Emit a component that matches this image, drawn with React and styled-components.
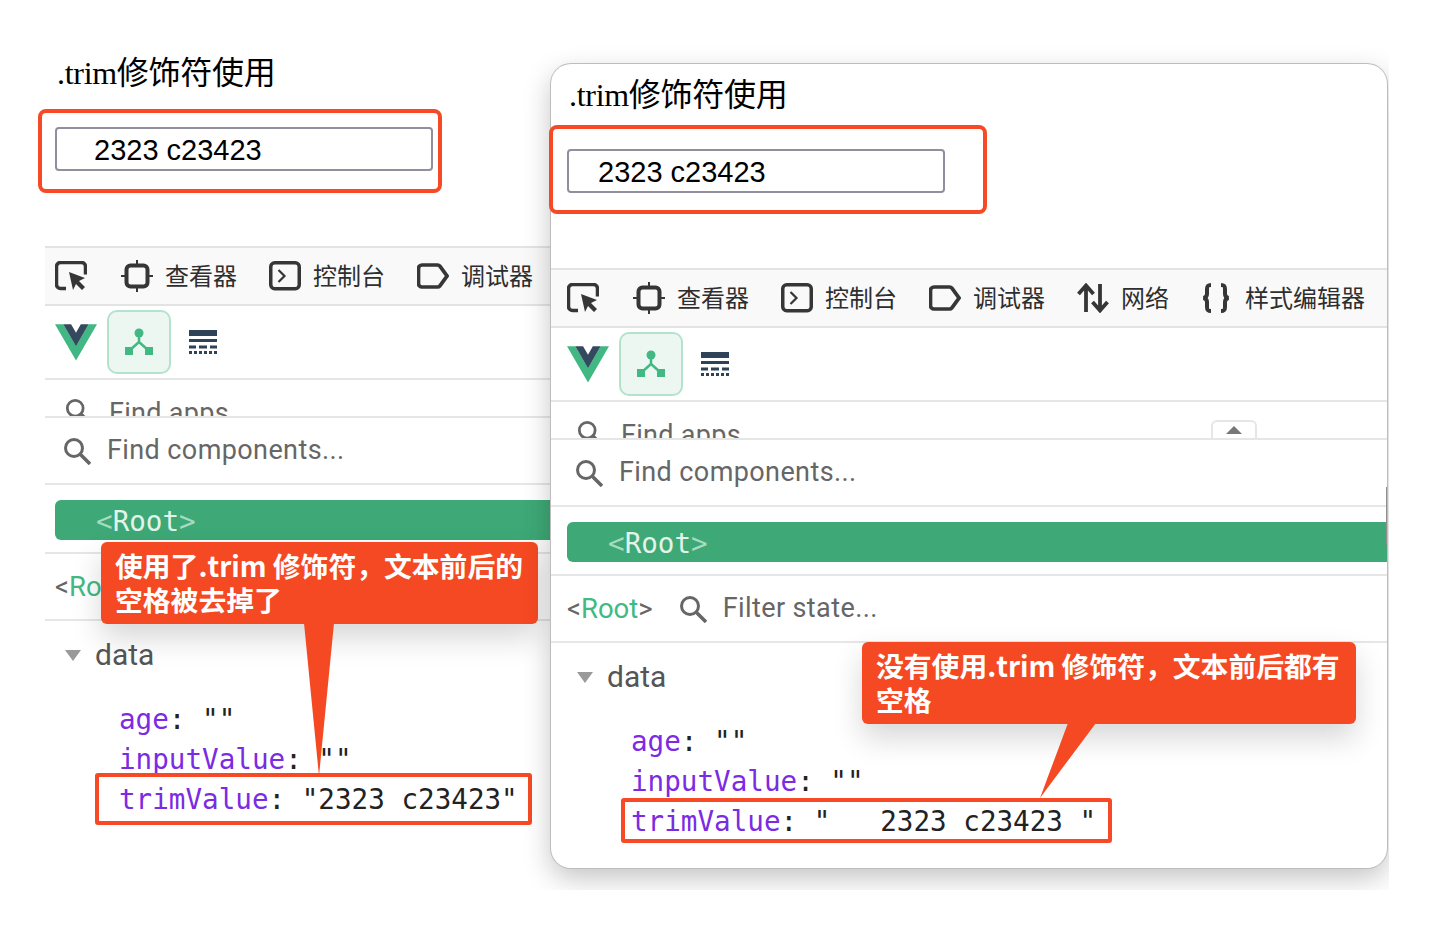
import React from "react";
import styled, { createGlobalStyle } from "styled-components";

const Global = createGlobalStyle`
  html, body { margin: 0; padding: 0; background: #fff; }
  body { font-family: "Liberation Sans", "Noto Sans CJK SC", sans-serif; }
`;

const Canvas = styled.div`
  position: relative;
  width: 1429px;
  height: 930px;
  overflow: hidden;
  background: #fff;
`;

const Panel = styled.section`
  position: absolute;
  left: 45px;
  top: 42px;
  width: 506px;
  height: 800px;
  overflow: hidden;
  background: #fff;
`;

/* The window's drop shadow is cut off by the edge of the captured area */
const CaptureFrame = styled.div`
  position: absolute;
  left: 500px;
  top: 44px;
  width: 889px;
  height: 846px;
  overflow: hidden;
  padding: 20px 0 0 51px;
  box-sizing: border-box;
`;

const FloatingWindow = styled.section`
  position: relative;
  width: 836px;
  height: 804px;
  overflow: hidden;
  background: #fff;
  border-radius: 20px;
  box-shadow: 0 0 0 1px #bdbdbd, 0 10px 28px rgba(0, 0, 0, 0.24);
`;

const Scrollbar = styled.span`
  position: absolute;
  right: 0;
  top: 423px;
  width: 1px;
  height: 58px;
  background: #8e8e8e;
`;

const PageHead = styled.div`
  padding: 9px 0 0 ${(p) => p.$inset + 2}px;
  height: 204px;
  box-sizing: border-box;
`;

const Title = styled.h1`
  margin: 0;
  font: 400 32px/44px "Liberation Serif", "Noto Sans CJK SC", serif;
  letter-spacing: -0.3px;
  color: #000;
`;

const TextInput = styled.input`
  display: block;
  box-sizing: border-box;
  margin: 32px 0 0 -2px;
  width: 378px;
  height: 44px;
  padding: 2px 0 0 ${(p) => p.$pad}px;
  border: 2px solid #8f8f9d;
  border-radius: 4px;
  font: 400 29px "Liberation Sans", Arial, sans-serif;
  color: #000;
  background: #fff;
  outline: none;
`;

const Toolbar = styled.div`
  display: flex;
  align-items: center;
  box-sizing: border-box;
  height: 60px;
  padding-left: ${(p) => p.$inset}px;
  background: #f9f9fa;
  border-top: 2px solid #e3e3e3;
  border-bottom: 2px solid #e3e3e3;
  white-space: nowrap;
`;

const Separator = styled.span`
  width: 2px;
  height: 38px;
  margin: 0 18px 0 16px;
  background: #e0e0e0;
`;

const Tab = styled.div`
  display: flex;
  align-items: center;
  gap: 12px;
  margin-right: 32px;
`;

const TabLabel = styled.span`
  margin-top: -2px;
  font: 400 24px/32px "Noto Sans CJK SC", sans-serif;
  color: #2e2e2e;
`;

const Plain = styled.svg`
  display: block;
  flex: none;
`;

const DevRow = styled.div`
  display: flex;
  align-items: center;
  box-sizing: border-box;
  height: ${(p) => p.$h}px;
  padding-left: ${(p) => p.$inset}px;
  border-bottom: 2px solid #e6e6e6;
  gap: ${(p) => p.$gap || 0}px;
`;

const ToolButton = styled.div`
  display: flex;
  align-items: center;
  justify-content: center;
  box-sizing: border-box;
  width: 64px;
  height: 64px;
  margin: 0 18px 0 10px;
  background: #ecf7f2;
  border: 2px solid #b4e3cd;
  border-radius: 10px;
`;

const AppsRow = styled.div`
  position: relative;
  box-sizing: border-box;
  height: 38px;
  padding: 18px 0 0 ${(p) => p.$inset + 10}px;
  border-bottom: 2px solid #e6e6e6;
  overflow: hidden;
  display: flex;
  gap: 18px;
  align-items: flex-start;
  font: 400 27px/30px Roboto, sans-serif;
  color: #666;
  letter-spacing: 0.3px;
`;

const Collapse = styled.span`
  position: absolute;
  left: 660px;
  top: 18px;
  width: 46px;
  height: 40px;
  box-sizing: border-box;
  border: 2px solid #e6e6e6;
  border-radius: 6px;
  &::after {
    content: "";
    position: absolute;
    left: 13px;
    top: 4px;
    border: 8px solid transparent;
    border-top: 0;
    border-bottom: 8px solid #777;
  }
`;

const SearchText = styled.span`
  margin-top: -2px;
  font: 400 27px/32px Roboto, sans-serif;
  color: #666;
  letter-spacing: 0.4px;
  white-space: nowrap;
`;

const SelectedNode = styled.div`
  box-sizing: border-box;
  width: 100%;
  height: 40px;
  padding-left: 41px;
  background: #3ea876;
  border-radius: 6px 0 0 6px;
  font: 400 27.6px/44px "DejaVu Sans Mono", monospace;
  color: #e2f4ea;
`;

const Bracket = styled.span`
  color: ${(p) => p.$c};
`;

const RootRow = styled(DevRow)`
  padding-top: 3px;
`;

const StateName = styled.span`
  font: 400 27.5px/32px Roboto, sans-serif;
  color: #666;
  margin-right: 10px;
  white-space: nowrap;
`;

const StateTree = styled.div`
  padding: 14px 0 0 ${(p) => p.$inset + 10}px;
`;

const GroupHead = styled.div`
  display: flex;
  align-items: center;
  gap: 14px;
  height: 40px;
  margin-bottom: 25px;
  font: 400 30px/40px Roboto, sans-serif;
  color: #555;
`;

const Caret = styled.span`
  width: 0;
  height: 0;
  border-left: 8px solid transparent;
  border-right: 8px solid transparent;
  border-top: 11px solid #999;
`;

const StateLine = styled.div`
  padding-left: 54px;
  font: 400 27.6px/40px "DejaVu Sans Mono", monospace;
  white-space: pre;
  color: #222;
`;

const Key = styled.span`
  color: #7b2be2;
`;

const Highlight = styled.div`
  position: absolute;
  left: ${(p) => p.$x}px;
  top: ${(p) => p.$y}px;
  width: ${(p) => p.$w}px;
  height: ${(p) => p.$h}px;
  box-sizing: border-box;
  border: 4px solid #f54a25;
  border-radius: ${(p) => p.$r}px;
  pointer-events: none;
`;

const Callout = styled.div`
  position: absolute;
  left: ${(p) => p.$x}px;
  top: ${(p) => p.$y}px;
  width: ${(p) => p.$w}px;
  height: 82px;
  box-sizing: border-box;
  padding: 6px 14px;
  background: #f54923;
  border-radius: 6px;
  box-shadow: 0 14px 30px rgba(0, 0, 0, 0.16);
  font: 700 27.8px/34px "Noto Sans CJK SC", sans-serif;
  color: #fff;
  white-space: nowrap;
`;

const Pointer = styled.svg`
  position: absolute;
  left: ${(p) => p.$x}px;
  top: 81px;
  display: block;
`;

const Ink = "#363636";

const PickIcon = () => (
  <Plain width="32" height="30" viewBox="0 0 32 30" fill="none">
    <path d="M11 27.500H5.500a4 4 0 0 1-4-4V5.500a4 4 0 0 1 4-4h21a4 4 0 0 1 4 4v8" stroke={Ink} strokeWidth="3.500" />
    <path d="M14 11l16 6-6 3 6 6-3 3-6-6-3 6z" fill={Ink} />
  </Plain>
);

const InspectorIcon = () => (
  <Plain width="32" height="32" viewBox="0 0 32 32" fill="none">
    <rect x="5.500" y="5.500" width="21" height="21" rx="4" stroke={Ink} strokeWidth="4" />
    <path d="M16 0v5M16 27v5M0 16h5M27 16h5" stroke={Ink} strokeWidth="2" />
  </Plain>
);

const ConsoleIcon = () => (
  <Plain width="32" height="30" viewBox="0 0 32 30" fill="none">
    <rect x="1.750" y="1.750" width="28.500" height="26" rx="4" stroke={Ink} strokeWidth="3.500" />
    <path d="M9.500 9l6 6-6 6" stroke={Ink} strokeWidth="2.200" />
  </Plain>
);

const DebuggerIcon = () => (
  <Plain width="32" height="26" viewBox="0 0 32 26" fill="none">
    <path d="M5 2h15.500a3 3 0 0 1 2.400 1.200L30 13l-7.100 9.800a3 3 0 0 1-2.400 1.200H5a3.500 3.500 0 0 1-3.500-3.500V5.500A3.500 3.500 0 0 1 5 2z" stroke={Ink} strokeWidth="3.700" />
  </Plain>
);

const NetworkIcon = () => (
  <Plain width="32" height="30" viewBox="0 0 32 30" fill="none">
    <path d="M9 29V3M1.500 11L9 2.500 16.500 11M23 1v26M15.500 19L23 27.500 30.500 19" stroke={Ink} strokeWidth="3.800" />
  </Plain>
);

const BracesIcon = () => (
  <Plain width="32" height="30" viewBox="0 0 30 30" fill="none" preserveAspectRatio="xMinYMid meet">
    <path d="M10 2C6.500 2 6 3.500 6 6v5c0 2-1 3.500-3.500 4C5 15.500 6 17 6 19v5c0 2.500.5 4 4 4M20 2c3.500 0 4 1.500 4 4v5c0 2 1 3.500 3.500 4-2.500.5-3.500 2-3.500 4v5c0 2.500-.5 4-4 4" stroke={Ink} strokeWidth="4" />
  </Plain>
);

const VueLogo = () => (
  <Plain width="42" height="37" viewBox="0 0 256 221">
    <path d="M204.800 0H256L128 220.800 0 0h50.560L128 132.480 204.800 0Z" fill="#41b883" />
    <path d="M50.560 0L128 133.120 204.800 0h-47.360L128 51.200 97.920 0H50.560Z" fill="#34495e" />
  </Plain>
);

const TreeIcon = () => (
  <Plain width="28" height="28" viewBox="0 0 28 28" fill="#42b983">
    <circle cx="14" cy="5" r="4.500" />
    <rect x="0" y="19" width="8" height="8" />
    <rect x="20" y="19" width="8" height="8" />
    <path d="M14 8v7M14 14L5 22M14 14l9 8" stroke="#42b983" strokeWidth="2.500" fill="none" />
  </Plain>
);

const TimelineIcon = () => (
  <Plain width="28" height="24" viewBox="0 0 28 24" fill="#2f4358">
    <rect x="0" y="0" width="28" height="6" />
    <rect x="0" y="9" width="28" height="3" />
    <path d="M0 15.500h7v3H0zM10 15.500h8v3h-8zM21 15.500h7v3h-7z" />
    <path d="M0 21h3v3H0zM5 21h3v3H5zM10 21h3v3h-3zM15 21h3v3h-3zM20 21h3v3h-3zM25 21h3v3h-3z" />
  </Plain>
);

const SearchIcon = ({ size = 28 }) => (
  <Plain width={size} height={size} viewBox="0 0 28 28" fill="none">
    <circle cx="11" cy="11" r="8.500" stroke="#666" strokeWidth="3" />
    <path d="M17.500 17.500L27 27" stroke="#666" strokeWidth="3.500" />
  </Plain>
);

function DevtoolsContent({ inset, inputPad, full }) {
  return (
    <>
      <PageHead $inset={inset}>
        <Title>.trim修饰符使用</Title>
        <TextInput $pad={inputPad} readOnly value="2323 c23423" />
      </PageHead>
      <Toolbar $inset={inset}>
        <PickIcon />
        <Separator />
        <Tab><InspectorIcon /><TabLabel>查看器</TabLabel></Tab>
        <Tab><ConsoleIcon /><TabLabel>控制台</TabLabel></Tab>
        <Tab><DebuggerIcon /><TabLabel>调试器</TabLabel></Tab>
        <Tab><NetworkIcon /><TabLabel>网络</TabLabel></Tab>
        <Tab><BracesIcon /><TabLabel>样式编辑器</TabLabel></Tab>
      </Toolbar>
      <DevRow $h={74} $inset={inset}>
        <VueLogo />
        <ToolButton><TreeIcon /></ToolButton>
        <TimelineIcon />
      </DevRow>
      <AppsRow $inset={inset}>
        <SearchIcon size={26} />
        Find apps
        {full && <Collapse />}
      </AppsRow>
      <DevRow $h={67} $inset={inset + 8} $gap={16}>
        <SearchIcon />
        <SearchText>Find components...</SearchText>
      </DevRow>
      <RootRow $h={69} $inset={inset}>
        <SelectedNode>
          <Bracket $c="#a5dcc0">&lt;</Bracket>Root<Bracket $c="#a5dcc0">&gt;</Bracket>
        </SelectedNode>
      </RootRow>
      <DevRow $h={67} $inset={inset} $gap={16}>
        <StateName>
          &lt;<Bracket $c="#42b983">Root</Bracket>&gt;
        </StateName>
        <SearchIcon />
        <SearchText>Filter state...</SearchText>
      </DevRow>
      <StateTree $inset={inset}>
        <GroupHead><Caret />data</GroupHead>
        <StateLine><Key>age</Key>: ""</StateLine>
        <StateLine><Key>inputValue</Key>: ""</StateLine>
        <StateLine><Key>trimValue</Key>: {full ? '"   2323 c23423 "' : '"2323 c23423"'}</StateLine>
      </StateTree>
    </>
  );
}

export default function App() {
  return (
    <Canvas>
      <Global />
      <Panel>
        <DevtoolsContent inset={10} inputPad={37} />
      </Panel>
      <Highlight $x={38} $y={109} $w={404} $h={84} $r={8} />
      <Highlight $x={95} $y={773} $w={437} $h={52} $r={3} />
      <Callout $x={101} $y={542} $w={437}>
        使用了.trim 修饰符，文本前后的<br />空格被去掉了
        <Pointer $x={202} width="32" height="154" viewBox="0 0 32 154">
          <polygon points="1,0 31,0 16,153" fill="#f54923" />
        </Pointer>
      </Callout>

      <CaptureFrame>
        <FloatingWindow>
          <DevtoolsContent inset={16} inputPad={29} full />
          <Scrollbar />
        </FloatingWindow>
      </CaptureFrame>
      <Highlight $x={549} $y={125} $w={438} $h={89} $r={8} />
      <Highlight $x={621} $y={798} $w={491} $h={45} $r={3} />
      <Callout $x={862} $y={642} $w={494}>
        没有使用.trim 修饰符，文本前后都有<br />空格
        <Pointer $x={177} width="60" height="76" viewBox="0 0 60 76">
          <polygon points="29,0 57,0 1,75" fill="#f54923" />
        </Pointer>
      </Callout>
    </Canvas>
  );
}
